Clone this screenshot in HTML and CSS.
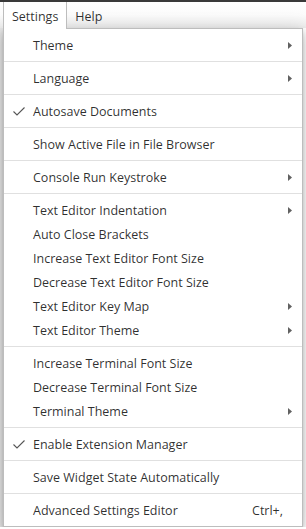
FILE: index.html
```html
<!DOCTYPE html>
<html>
<head>
<meta charset="utf-8">
<link rel="stylesheet" href="styles.css">
</head>
<body>
<div class="topline"></div>
<div class="menubar">
  <div class="mb-item active">Settings</div>
  <div class="mb-item">Help</div>
</div>
<div class="page">
  <ul class="menu">
    <li class="item"><span class="icon"></span><span class="label">Theme</span><span class="key"></span><span class="sub"><svg width="4" height="7" viewBox="0 0 4 7"><path d="M0 0L4 3.5L0 7Z" fill="#616161"/></svg></span></li>
    <li class="sep"></li>
    <li class="item"><span class="icon"></span><span class="label">Language</span><span class="key"></span><span class="sub"><svg width="4" height="7" viewBox="0 0 4 7"><path d="M0 0L4 3.5L0 7Z" fill="#616161"/></svg></span></li>
    <li class="sep"></li>
    <li class="item"><span class="icon"><svg width="12" height="10" viewBox="0 0 12 10"><path d="M0.5 5.5L4 9L11.5 1.5" fill="none" stroke="#555" stroke-width="1.1"/></svg></span><span class="label">Autosave Documents</span><span class="key"></span><span class="sub"></span></li>
    <li class="sep"></li>
    <li class="item"><span class="icon"></span><span class="label">Show Active File in File Browser</span><span class="key"></span><span class="sub"></span></li>
    <li class="sep"></li>
    <li class="item"><span class="icon"></span><span class="label">Console Run Keystroke</span><span class="key"></span><span class="sub"><svg width="4" height="7" viewBox="0 0 4 7"><path d="M0 0L4 3.5L0 7Z" fill="#616161"/></svg></span></li>
    <li class="sep"></li>
    <li class="item"><span class="icon"></span><span class="label">Text Editor Indentation</span><span class="key"></span><span class="sub"><svg width="4" height="7" viewBox="0 0 4 7"><path d="M0 0L4 3.5L0 7Z" fill="#616161"/></svg></span></li>
    <li class="item"><span class="icon"></span><span class="label">Auto Close Brackets</span><span class="key"></span><span class="sub"></span></li>
    <li class="item"><span class="icon"></span><span class="label">Increase Text Editor Font Size</span><span class="key"></span><span class="sub"></span></li>
    <li class="item"><span class="icon"></span><span class="label">Decrease Text Editor Font Size</span><span class="key"></span><span class="sub"></span></li>
    <li class="item"><span class="icon"></span><span class="label">Text Editor Key Map</span><span class="key"></span><span class="sub"><svg width="4" height="7" viewBox="0 0 4 7"><path d="M0 0L4 3.5L0 7Z" fill="#616161"/></svg></span></li>
    <li class="item"><span class="icon"></span><span class="label">Text Editor Theme</span><span class="key"></span><span class="sub"><svg width="4" height="7" viewBox="0 0 4 7"><path d="M0 0L4 3.5L0 7Z" fill="#616161"/></svg></span></li>
    <li class="sep"></li>
    <li class="item"><span class="icon"></span><span class="label">Increase Terminal Font Size</span><span class="key"></span><span class="sub"></span></li>
    <li class="item"><span class="icon"></span><span class="label">Decrease Terminal Font Size</span><span class="key"></span><span class="sub"></span></li>
    <li class="item"><span class="icon"></span><span class="label">Terminal Theme</span><span class="key"></span><span class="sub"><svg width="4" height="7" viewBox="0 0 4 7"><path d="M0 0L4 3.5L0 7Z" fill="#616161"/></svg></span></li>
    <li class="sep"></li>
    <li class="item"><span class="icon"><svg width="12" height="10" viewBox="0 0 12 10"><path d="M0.5 5.5L4 9L11.5 1.5" fill="none" stroke="#555" stroke-width="1.1"/></svg></span><span class="label">Enable Extension Manager</span><span class="key"></span><span class="sub"></span></li>
    <li class="sep"></li>
    <li class="item"><span class="icon"></span><span class="label">Save Widget State Automatically</span><span class="key"></span><span class="sub"></span></li>
    <li class="sep"></li>
    <li class="item"><span class="icon"></span><span class="label">Advanced Settings Editor</span><span class="key">Ctrl+,</span><span class="sub"></span></li>
  </ul>
</div>
</body>
</html>
```
FILE: styles.css
```css
html, body {
  margin: 0;
  padding: 0;
  background: #ffffff;
  font-family: "Open Sans", "Noto Sans", sans-serif;
  font-size: 12.5px;
  color: rgba(0, 0, 0, 0.82);
}
.topline {
  height: 2px;
  background: #3a3a3a;
}
.menubar {
  height: 26px;
  display: flex;
  align-items: flex-start;
  padding-left: 3px;
  background: linear-gradient(#ffffff 0%, #fbfbfb 50%, #ececec 100%);
}
.mb-item {
  height: 26px;
  line-height: 29px;
  padding: 0 8px;
  box-sizing: border-box;
}
.mb-item.active {
  position: relative;
  z-index: 2;
  height: 27px;
  background: #ffffff;
  border-left: 1px solid #bdbdbd;
  border-right: 1px solid #bdbdbd;
}
.page {
  padding-left: 3px;
  background: linear-gradient(90deg, #e6e6e6 0, #e6e6e6 3px, #ffffff 3px);
}
.menu {
  list-style: none;
  margin: 0;
  padding: 4px 0;
  width: 300px;
  box-sizing: border-box;
  background: #ffffff;
  border: 1px solid #bdbdbd;
  box-shadow: 0 3px 5px -1px rgba(0,0,0,0.2), 0 6px 10px 0 rgba(0,0,0,0.14), 0 1px 18px 0 rgba(0,0,0,0.12);
}
.item {
  display: flex;
  align-items: center;
  height: 24px;
}
.icon {
  width: 29px;
  display: flex;
  justify-content: center;
  align-items: center;
}
.label {
  flex: 1;
  white-space: nowrap;
}
.key {
  padding-right: 5px;
}
.sub {
  width: 14px;
  display: flex;
  align-items: center;
}
.sep {
  height: 1px;
  background: #e0e0e0;
  margin: 4px 0;
}
```
